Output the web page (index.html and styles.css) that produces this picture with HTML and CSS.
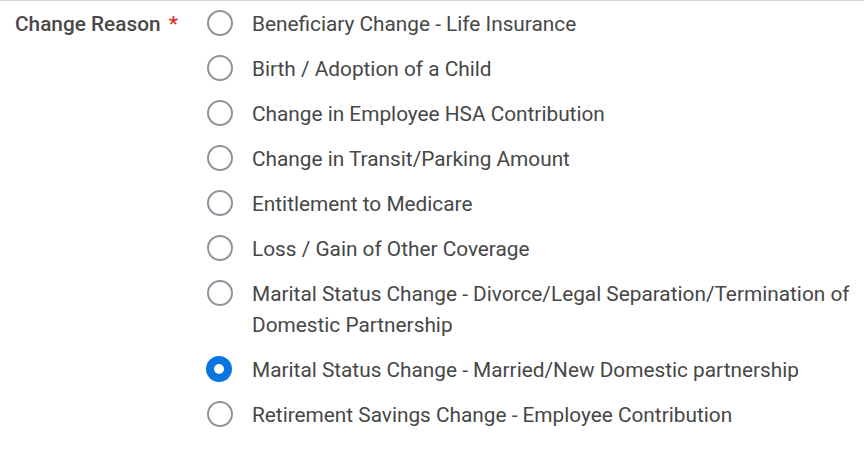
FILE: index.html
```html
<!DOCTYPE html>
<html>
<head>
<meta charset="utf-8">
<link rel="stylesheet" href="styles.css">
</head>
<body>
<div class="field">
  <div class="label">Change Reason <span class="req">*</span></div>
  <div class="options">
    <div class="option"><span class="radio"></span><span class="text">Beneficiary Change - Life Insurance</span></div>
    <div class="option"><span class="radio"></span><span class="text">Birth / Adoption of a Child</span></div>
    <div class="option"><span class="radio"></span><span class="text">Change in Employee HSA Contribution</span></div>
    <div class="option"><span class="radio"></span><span class="text">Change in Transit/Parking Amount</span></div>
    <div class="option"><span class="radio"></span><span class="text">Entitlement to Medicare</span></div>
    <div class="option"><span class="radio"></span><span class="text">Loss / Gain of Other Coverage</span></div>
    <div class="option"><span class="radio"></span><span class="text">Marital Status Change - Divorce/Legal Separation/Termination of Domestic Partnership</span></div>
    <div class="option"><span class="radio checked"></span><span class="text">Marital Status Change - Married/New Domestic partnership</span></div>
    <div class="option"><span class="radio"></span><span class="text">Retirement Savings Change - Employee Contribution</span></div>
  </div>
</div>
</body>
</html>
```

FILE: styles.css
```css
html, body {
  margin: 0;
  padding: 0;
  background: #fff;
}
body {
  font-family: Roboto, "Liberation Sans", sans-serif;
  color: #474747;
  border-top: 1px solid #d6d6d6;
  width: 864px;
  height: 455px;
  overflow: hidden;
}
.field {
  display: flex;
  padding-top: 8px;
}
.label {
  width: 192px;
  padding-left: 15px;
  font-size: 20.8px;
  font-weight: 500;
  line-height: 31px;
  color: #494949;
  flex-shrink: 0;
}
.req {
  color: #de2e21;
  margin-left: 3px;
}
.options {
  display: flex;
  flex-direction: column;
  gap: 14px;
  width: 657px;
}
.option {
  display: flex;
  align-items: flex-start;
}
.radio {
  flex-shrink: 0;
  box-sizing: border-box;
  width: 26px;
  height: 26px;
  margin-top: 1px;
  border: 2px solid #8d949b;
  border-radius: 50%;
  margin-right: 19px;
}
.radio.checked {
  margin-left: -1px;
  margin-right: 20px;
  border: 8px solid #0875e1;
}
.text {
  font-size: 20.8px;
  line-height: 31px;
}
```
